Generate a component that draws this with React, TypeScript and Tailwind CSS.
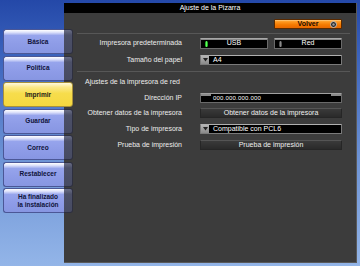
import React from "react";

const navItems = [
  { label: "Básica" },
  { label: "Política" },
  { label: "Imprimir", active: true },
  { label: "Guardar" },
  { label: "Correo" },
  { label: "Restablecer" },
  { label: "Ha finalizado\nla instalación" },
];

function NavButton({ label, active }: { label: string; active?: boolean }) {
  if (active) {
    return (
      <div className="relative z-10 ml-[3px] flex h-[25px] w-[70px] items-center justify-center rounded-[3px] border border-[#a8913a] bg-[linear-gradient(to_bottom,#fffbe0_0%,#fbe98a_18%,#f7dd4c_45%,#f5d840_100%)] text-center text-[6.5px] font-bold leading-[8px] text-[#1a1a1a]">
        {label}
      </div>
    );
  }
  return (
    <div className="relative z-10 ml-[3px] flex h-[25px] w-[70px]">
      <div className="flex h-full w-[61px] rounded-l-[3px] border border-r-0 border-[#4b5796] bg-[linear-gradient(to_bottom,#ffffff_0%,#dfe3fb_10%,#96a4ec_24%,#8e9ce7_60%,#8796e2_100%)]" />
      <div className="h-full w-[9px] rounded-r-[3px] border border-l-0 border-[#2e3040] bg-[linear-gradient(to_bottom,#6a6e86_0%,#4c5068_22%,#474b62_100%)]" />
      <div className="absolute inset-0 flex items-center justify-center whitespace-pre-line text-center text-[6.5px] font-bold leading-[8px] text-[#10143a]">
        {label}
      </div>
    </div>
  );
}

function Toggle({ label, on }: { label: string; on?: boolean }) {
  return (
    <div className="relative flex h-[11px] w-[68px] items-center justify-center rounded-[1px] border border-[#6a6a6a] border-t-[#a8a8a8] bg-[linear-gradient(to_bottom,#8a8a8a_0%,#8a8a8a_12%,#000000_16%,#000000_100%)] text-[7px] text-white">
      <div
        className={
          on
            ? "absolute left-[4px] top-[2px] h-[6px] w-[3px] rounded-[2px] bg-[linear-gradient(to_right,#0c8a0c,#5cff5c,#0c8a0c)]"
            : "absolute left-[4px] top-[2px] h-[6px] w-[3px] rounded-[2px] bg-[linear-gradient(to_right,#3a3a3a,#8a8a8a,#3a3a3a)]"
        }
      />
      <span>{label}</span>
    </div>
  );
}

function Select({ value }: { value: string }) {
  return (
    <div className="flex h-[10px] w-[142px] items-stretch rounded-[1px] border border-[#7a7a7a] border-t-[#b0b0b0] bg-black">
      <div className="flex w-[8px] items-center justify-center bg-[linear-gradient(to_bottom,#b5b5b5,#8a8a8a)]">
        <svg width="5" height="4" viewBox="0 0 5 4">
          <path d="M0 0 L5 0 L2.5 3.5 Z" fill="#222" />
        </svg>
      </div>
      <div className="flex items-center pl-[4px] text-[7px] text-white">{value}</div>
    </div>
  );
}

function DarkButton({ label }: { label: string }) {
  return (
    <div className="flex h-[10px] w-[142px] items-center justify-center rounded-[1px] border border-[#262626] border-t-[#555555] bg-[linear-gradient(to_bottom,#3a3a3a,#2a2a2a)] text-[7px] text-[#f0f0f0]">
      {label}
    </div>
  );
}

function Row({ label, children, className }: { label: string; children: React.ReactNode; className?: string }) {
  return (
    <div className={"flex items-center " + (className ?? "")}>
      <div className="w-[118px] whitespace-nowrap text-right text-[7px] text-[#ececec]">{label}</div>
      <div className="ml-[18px] flex">{children}</div>
    </div>
  );
}

export default function App() {
  return (
    <div className="flex h-[266px] w-[360px] overflow-hidden bg-[linear-gradient(to_bottom,#2448a8_0%,#3a62bc_20%,#6e94d6_60%,#93b5e8_100%)] pt-[3px] font-['Liberation_Sans',Arial,sans-serif]">
      <div className="flex w-[64px] shrink-0 flex-col gap-[1.5px] pt-[26px]">
        {navItems.map((n) => (
          <NavButton key={n.label} label={n.label} active={n.active} />
        ))}
      </div>
      <div className="flex h-[260px] w-[293px] flex-col border-r border-b border-[#5a5a5a] bg-[#3c3c3c]">
        <div className="flex h-[10px] items-center justify-center bg-black text-[7px] text-white">
          Ajuste de la Pizarra
        </div>
        <div className="mt-[6px] flex justify-end pr-[14px]">
          <div className="relative flex h-[10px] w-[68px] items-center justify-center rounded-[1px] border border-[#5a2a00] bg-[linear-gradient(to_bottom,#ffd08a_0%,#ff9a22_20%,#f57a00_60%,#e86800_100%)] text-[7px] font-bold text-[#1a0a00]">
            <span>Volver</span>
            <svg className="absolute right-[4px] top-[1px]" width="7" height="7" viewBox="0 0 7 7">
              <circle cx="3.5" cy="3.5" r="3" fill="#2a2a2a" stroke="#d8d8d8" strokeWidth="0.8" />
              <circle cx="3.5" cy="3.5" r="1.2" fill="#9a9a9a" />
            </svg>
          </div>
        </div>
        <div className="ml-[13px] mr-[6px] mt-[4px] h-px bg-[#575757]" />
        <Row label="Impresora predeterminada" className="mt-[4px] h-[11px]">
          <Toggle label="USB" on />
          <div className="w-[6px]" />
          <Toggle label="Red" />
        </Row>
        <Row label="Tamaño del papel" className="mt-[6px] h-[10px]">
          <Select value="A4" />
        </Row>
        <div className="ml-[13px] mr-[6px] mt-[6px] h-px bg-[#575757]" />
        <div className="ml-[21px] mt-[5px] flex h-[10px] items-center text-[7px] text-[#ececec]">
          Ajustes de la impresora de red
        </div>
        <Row label="Dirección IP" className="mt-[6px] h-[10px]">
          <div className="relative flex h-[10px] w-[142px] items-center rounded-[1px] border border-[#6a6a6a] border-t-[#a0a0a0] bg-black pl-[12px] text-[6px] tracking-[0.2px] text-white">
            <div className="absolute left-0 top-0 h-[2px] w-[10px] bg-[#8a8a8a]" />
            <div className="absolute right-0 top-0 h-[2px] w-[10px] bg-[#8a8a8a]" />
            000.000.000.000
          </div>
        </Row>
        <Row label="Obtener datos de la impresora" className="mt-[5px] h-[10px]">
          <DarkButton label="Obtener datos de la impresora" />
        </Row>
        <Row label="Tipo de impresora" className="mt-[6px] h-[10px]">
          <Select value="Compatible con PCL6" />
        </Row>
        <Row label="Prueba de impresión" className="mt-[6px] h-[10px]">
          <DarkButton label="Prueba de impresión" />
        </Row>
      </div>
    </div>
  );
}
